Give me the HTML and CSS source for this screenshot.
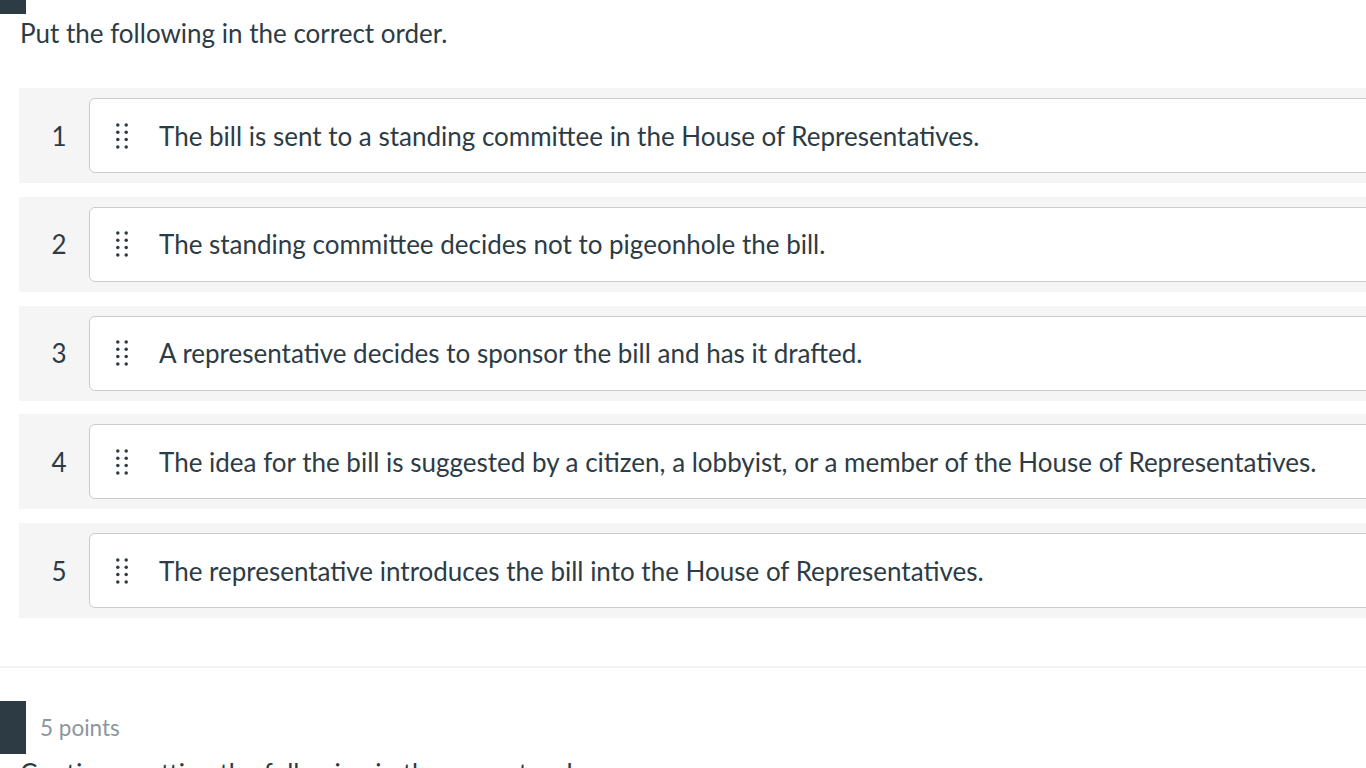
FILE: index.html
```html
<!DOCTYPE html>
<html lang="en">
<head>
<meta charset="utf-8">
<title>Quiz</title>
<link rel="stylesheet" href="styles.css">
</head>
<body>
<div class="page">
  <div class="q-header q-header-prev">
    <div class="q-bar"></div>
    <div class="q-points">5 points</div>
  </div>
  <section class="question">
    <p class="q-text">Put the following in the correct order.</p>
    <ol class="order-list">
      <li class="order-row"><span class="order-num">1</span><div class="order-card"><svg class="grip" viewBox="0 0 12 26" width="12" height="26"><circle cx="1.8" cy="2" r="1.75"/><circle cx="10.2" cy="2" r="1.75"/><circle cx="1.8" cy="9.3" r="1.75"/><circle cx="10.2" cy="9.3" r="1.75"/><circle cx="1.8" cy="16.6" r="1.75"/><circle cx="10.2" cy="16.6" r="1.75"/><circle cx="1.8" cy="24" r="1.75"/><circle cx="10.2" cy="24" r="1.75"/></svg><span class="order-text">The bill is sent to a standing committee in the House of Representatives.</span></div></li>
      <li class="order-row"><span class="order-num">2</span><div class="order-card"><svg class="grip" viewBox="0 0 12 26" width="12" height="26"><circle cx="1.8" cy="2" r="1.75"/><circle cx="10.2" cy="2" r="1.75"/><circle cx="1.8" cy="9.3" r="1.75"/><circle cx="10.2" cy="9.3" r="1.75"/><circle cx="1.8" cy="16.6" r="1.75"/><circle cx="10.2" cy="16.6" r="1.75"/><circle cx="1.8" cy="24" r="1.75"/><circle cx="10.2" cy="24" r="1.75"/></svg><span class="order-text">The standing committee decides not to pigeonhole the bill.</span></div></li>
      <li class="order-row"><span class="order-num">3</span><div class="order-card"><svg class="grip" viewBox="0 0 12 26" width="12" height="26"><circle cx="1.8" cy="2" r="1.75"/><circle cx="10.2" cy="2" r="1.75"/><circle cx="1.8" cy="9.3" r="1.75"/><circle cx="10.2" cy="9.3" r="1.75"/><circle cx="1.8" cy="16.6" r="1.75"/><circle cx="10.2" cy="16.6" r="1.75"/><circle cx="1.8" cy="24" r="1.75"/><circle cx="10.2" cy="24" r="1.75"/></svg><span class="order-text">A representative decides to sponsor the bill and has it drafted.</span></div></li>
      <li class="order-row"><span class="order-num">4</span><div class="order-card"><svg class="grip" viewBox="0 0 12 26" width="12" height="26"><circle cx="1.8" cy="2" r="1.75"/><circle cx="10.2" cy="2" r="1.75"/><circle cx="1.8" cy="9.3" r="1.75"/><circle cx="10.2" cy="9.3" r="1.75"/><circle cx="1.8" cy="16.6" r="1.75"/><circle cx="10.2" cy="16.6" r="1.75"/><circle cx="1.8" cy="24" r="1.75"/><circle cx="10.2" cy="24" r="1.75"/></svg><span class="order-text">The idea for the bill is suggested by a citizen, a lobbyist, or a member of the House of Representatives.</span></div></li>
      <li class="order-row"><span class="order-num">5</span><div class="order-card"><svg class="grip" viewBox="0 0 12 26" width="12" height="26"><circle cx="1.8" cy="2" r="1.75"/><circle cx="10.2" cy="2" r="1.75"/><circle cx="1.8" cy="9.3" r="1.75"/><circle cx="10.2" cy="9.3" r="1.75"/><circle cx="1.8" cy="16.6" r="1.75"/><circle cx="10.2" cy="16.6" r="1.75"/><circle cx="1.8" cy="24" r="1.75"/><circle cx="10.2" cy="24" r="1.75"/></svg><span class="order-text">The representative introduces the bill into the House of Representatives.</span></div></li>
    </ol>
  </section>
  <hr class="q-sep">
  <div class="q-header">
    <div class="q-bar"></div>
    <div class="q-points">5 points</div>
  </div>
  <section class="question">
    <p class="q-text">Continue putting the following in the correct order.</p>
  </section>
</div>
</body>
</html>
```

FILE: styles.css
```css
html, body {
  margin: 0;
  padding: 0;
  background: #ffffff;
  overflow: hidden;
}

body {
  font-family: Lato, "Noto Sans", sans-serif;
  color: #2d3b45;
  width: 1366px;
  height: 768px;
}

.page {
  display: flex;
  flex-direction: column;
}

.q-header {
  display: flex;
  align-items: center;
  height: 53px;
}

.q-header-prev {
  margin-top: -39px;
}

.q-bar {
  width: 26px;
  height: 100%;
  background: #2d3b45;
}

.q-points {
  padding-left: 14px;
  font-size: 22.5px;
  line-height: 30px;
  color: #8b969e;
}

.question {
  padding-left: 20px;
}

.q-text {
  margin: 0;
  font-size: 26px;
  line-height: 38px;
}

.order-list {
  list-style: none;
  margin: 36px -60px 0 -1px;
  padding: 0;
  display: flex;
  flex-direction: column;
  gap: 13.75px;
}

.order-row {
  display: flex;
  align-items: stretch;
  height: 95px;
  box-sizing: border-box;
  padding: 10px 0;
  background: #f5f5f5;
}

.order-num {
  width: 70px;
  box-sizing: border-box;
  padding-left: 10px;
  display: flex;
  align-items: center;
  justify-content: center;
  font-size: 26px;
}

.order-card {
  flex: 1;
  display: flex;
  align-items: center;
  gap: 31px;
  padding-left: 26px;
  background: #ffffff;
  border: 1px solid #c7cdd1;
  border-radius: 6px;
}

.grip {
  flex: none;
  fill: #2d3b45;
}

.order-text {
  font-size: 26px;
  line-height: 36px;
  white-space: nowrap;
}

.q-sep {
  margin: 48px 0 33px;
  border: none;
  border-top: 2px solid #f2f2f2;
  height: 0;
}
```
